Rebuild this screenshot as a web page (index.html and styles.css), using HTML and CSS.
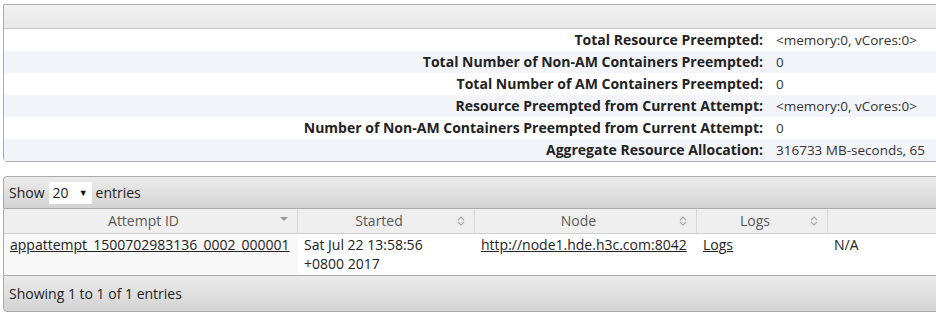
FILE: index.html
```html
<!DOCTYPE html>
<html lang="en">
<head>
    <meta charset="UTF-8">
    <title>Application Attempt</title>
    <link rel="stylesheet" href="styles.css">
</head>
<body>
    <!-- Preemption / resource info block -->
    <div class="info-wrap">
        <div class="info-head"></div>
        <div class="info-row">
            <div class="info-label">Total Resource Preempted:</div>
            <div class="info-value">&lt;memory:0, vCores:0&gt;</div>
        </div>
        <div class="info-row odd">
            <div class="info-label">Total Number of Non-AM Containers Preempted:</div>
            <div class="info-value">0</div>
        </div>
        <div class="info-row">
            <div class="info-label">Total Number of AM Containers Preempted:</div>
            <div class="info-value">0</div>
        </div>
        <div class="info-row odd">
            <div class="info-label">Resource Preempted from Current Attempt:</div>
            <div class="info-value">&lt;memory:0, vCores:0&gt;</div>
        </div>
        <div class="info-row">
            <div class="info-label">Number of Non-AM Containers Preempted from Current Attempt:</div>
            <div class="info-value">0</div>
        </div>
        <div class="info-row odd">
            <div class="info-label">Aggregate Resource Allocation:</div>
            <div class="info-value">316733 MB-seconds, 65</div>
        </div>
    </div>

    <!-- Attempts table -->
    <div class="table-wrap">
        <div class="toolbar top">
            <span>Show</span>
            <span class="select-box">20 <span class="caret">&#9660;</span></span>
            <span>entries</span>
        </div>
        <div class="grid head">
            <div class="th">Attempt ID
                <svg class="sort" width="10" height="8" viewBox="0 0 10 8"><path d="M1 2h8L5 6z" fill="#9a9a9a"/></svg>
            </div>
            <div class="th">Started
                <svg class="sort" width="10" height="12" viewBox="0 0 10 12"><path d="M2 5l3-3 3 3M2 7l3 3 3-3" fill="none" stroke="#a8a8a8" stroke-width="1.2"/></svg>
            </div>
            <div class="th">Node
                <svg class="sort" width="10" height="12" viewBox="0 0 10 12"><path d="M2 5l3-3 3 3M2 7l3 3 3-3" fill="none" stroke="#a8a8a8" stroke-width="1.2"/></svg>
            </div>
            <div class="th">Logs
                <svg class="sort" width="10" height="12" viewBox="0 0 10 12"><path d="M2 5l3-3 3 3M2 7l3 3 3-3" fill="none" stroke="#a8a8a8" stroke-width="1.2"/></svg>
            </div>
            <div class="th"></div>
        </div>
        <div class="grid body">
            <div class="td sorted"><a href="#">appattempt_1500702983136_0002_000001</a></div>
            <div class="td">Sat Jul 22 13:58:56<br>+0800 2017</div>
            <div class="td"><a href="#">http://node1.hde.h3c.com:8042</a></div>
            <div class="td"><a href="#">Logs</a></div>
            <div class="td">N/A</div>
        </div>
        <div class="toolbar bottom">Showing 1 to 1 of 1 entries</div>
    </div>
</body>
</html>
```

FILE: styles.css
```css
/* Page basics */
body {
    margin: 0;
    padding: 4px 0 0 3px;
    font-family: "Open Sans", "Noto Sans", sans-serif;
    font-size: 14px;
    color: #222;
    background: #fff;
    overflow: hidden;
    width: 960px;
}

/* Info block */
.info-wrap {
    width: 980px;
    border: 1px solid #aaa;
    border-radius: 0 0 0 4px;
}
.info-head {
    height: 23px;
    background: linear-gradient(#f1f1f1, #e8e8e8);
    border-bottom: 1px solid #c8c8c8;
}
.info-row {
    display: grid;
    grid-template-columns: 766px 1fr;
    height: 22px;
    line-height: 22px;
    background: #fff;
}
.info-row.odd {
    background: #f3f5fb;
}
.info-label {
    text-align: right;
    font-weight: bold;
    font-size: 14px;
    padding-right: 7px;
    color: #222;
    white-space: nowrap;
}
.info-value {
    padding-left: 6px;
    font-size: 13.5px;
    color: #333;
    white-space: nowrap;
}

/* Data table */
.table-wrap {
    margin-top: 14px;
    width: 980px;
}
.toolbar {
    background: linear-gradient(#ececec, #d3d3d3);
    border: 1px solid #aaa;
    color: #222;
    padding-left: 5px;
    display: flex;
    align-items: center;
    gap: 4px;
}
.toolbar.top {
    height: 31px;
    border-radius: 4px 0 0 0;
}
.toolbar.bottom {
    height: 35px;
    border-radius: 0 0 0 4px;
}
.select-box {
    background: #fff;
    padding: 0 4px;
    height: 22px;
    width: 35px;
    line-height: 22px;
    display: inline-flex;
    justify-content: space-between;
}
.caret {
    font-size: 9px;
    color: #111;
}
.grid {
    display: grid;
    grid-template-columns: 294px 177px 222px 131px 1fr;
    border-left: 1px solid #aaa;
}
.head {
    height: 24px;
    background: #efefef;
}
.th {
    position: relative;
    text-align: center;
    line-height: 24px;
    color: #5a5a5a;
    padding-right: 14px;
    border-right: 1px solid #d8d8d8;
    border-bottom: 1px solid #d0d0d0;
}
.sort {
    position: absolute;
    right: 8px;
    top: 6px;
}
.td {
    padding: 2px 6px 3px;
    line-height: 19px;
    height: 37px;
    background: #fff;
}
.td.sorted {
    background: #f8f8f8;
}
a {
    color: #222;
}
```
